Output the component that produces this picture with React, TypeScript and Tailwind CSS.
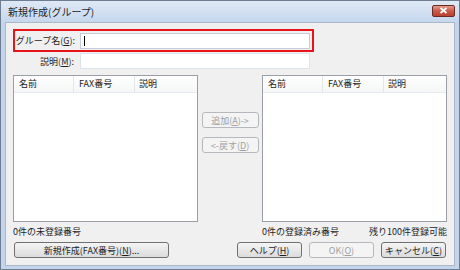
const font = "font-['Noto_Sans_CJK_JP','Noto_Sans',sans-serif]"

const Btn = ({ label, w, disabled }: { label: React.ReactNode; w: string; disabled?: boolean }) => (
    <div
        className={`${w} h-[16px] flex items-center justify-center rounded-[3px] border text-[9px] leading-none ${
            disabled
                ? 'border-[#b5b9bd] bg-[#f4f4f4] text-[#a0a0a0]'
                : 'border-[#707070] bg-gradient-to-b from-[#f4f4f4] to-[#dcdcdc] text-[#1e1e1e]'
        }`}
    >
        {label}
    </div>
)

const ListBox = () => (
    <div className="w-[185px] h-[147px] border border-[#9a9ea6] bg-white flex flex-col">
        <div className="h-[17px] flex items-stretch bg-gradient-to-b from-white to-[#f5f6f7] border-b border-[#e6e9ee] text-[9px] text-[#1e1e1e]">
            <div className="w-[60px] pl-[5px] flex items-center border-r border-[#e3e5e8]">名前</div>
            <div className="w-[61px] pl-[5px] flex items-center border-r border-[#e3e5e8]">FAX番号</div>
            <div className="flex-1 pl-[4px] flex items-center">説明</div>
        </div>
    </div>
)

const u = (c: string) => <span className="underline">{c}</span>

export default function App() {
    return (
        <div className={`${font} w-[460px] h-[270px] flex flex-col bg-[#c4d5eb] border border-[#6d7d92] text-[#1e1e1e]`}>
            <div className="h-[21px] flex items-center justify-between pl-[7px] pr-[4px] bg-gradient-to-b from-[#dfe9f5] to-[#c6d7ed]">
                <div className="text-[10px] leading-none pt-[1px]">新規作成(グループ)</div>
                <div className="w-[23px] h-[12px] mt-[-2px] rounded-[2px] border border-[#6b2a22] bg-gradient-to-b from-[#e39a8d] via-[#c9594a] to-[#b8402f] flex items-center justify-center">
                    <svg width="9" height="7" viewBox="0 0 9 7">
                        <path d="M1.5 1 L7.5 6 M7.5 1 L1.5 6" stroke="#ffffff" strokeWidth="1.8" />
                    </svg>
                </div>
            </div>
            <div className="flex-1 mx-[4px] mb-[3px] bg-[#f0f0f0] border border-[#a9b8ca] pl-[7px] pt-[6px] flex flex-col">
                <div className="w-[301px] h-[23px] border-2 border-[#e8141a] flex items-center">
                    <div className="w-[65px] pr-[5px] text-right text-[9px] leading-none">
                        グループ名({u('G')}):
                    </div>
                    <div className="w-[230px] h-[16px] border border-[#c3ccd8] bg-white flex items-center pl-[3px]">
                        <div className="w-[1px] h-[10px] bg-black" />
                    </div>
                </div>
                <div className="mt-[1px] flex items-center h-[16px]">
                    <div className="w-[67px] pr-[6px] text-right text-[9px] leading-none">
                        説明({u('M')}):
                    </div>
                    <div className="w-[230px] h-[16px] border border-[#dde3ea] bg-white" />
                </div>
                <div className="mt-[6px] flex">
                    <ListBox />
                    <div className="w-[64px] flex flex-col items-center pt-[37px] gap-[9px]">
                        <Btn w="w-[57px]" disabled label={<>追加({u('A')})-&gt;</>} />
                        <Btn w="w-[57px]" disabled label={<>&lt;-戻す({u('D')})</>} />
                    </div>
                    <ListBox />
                </div>
                <div className="mt-[3px] h-[12px] flex items-center text-[9px] leading-none">
                    <div className="w-[185px]">0件の未登録番号</div>
                    <div className="w-[64px]" />
                    <div className="w-[185px] flex justify-between">
                        <span>0件の登録済み番号</span>
                        <span>残り100件登録可能</span>
                    </div>
                </div>
                <div className="mt-[5px] flex items-center">
                    <div className="ml-[1px]">
                        <Btn w="w-[155px]" label={<>新規作成(FAX番号)({u('N')})...</>} />
                    </div>
                    <div className="ml-[68px] flex gap-[7px]">
                        <Btn w="w-[65px]" label={<>ヘルプ({u('H')})</>} />
                        <Btn w="w-[65px]" disabled label={<>OK({u('O')})</>} />
                        <Btn w="w-[65px]" label={<>キャンセル({u('C')})</>} />
                    </div>
                </div>
            </div>
        </div>
    )
}
